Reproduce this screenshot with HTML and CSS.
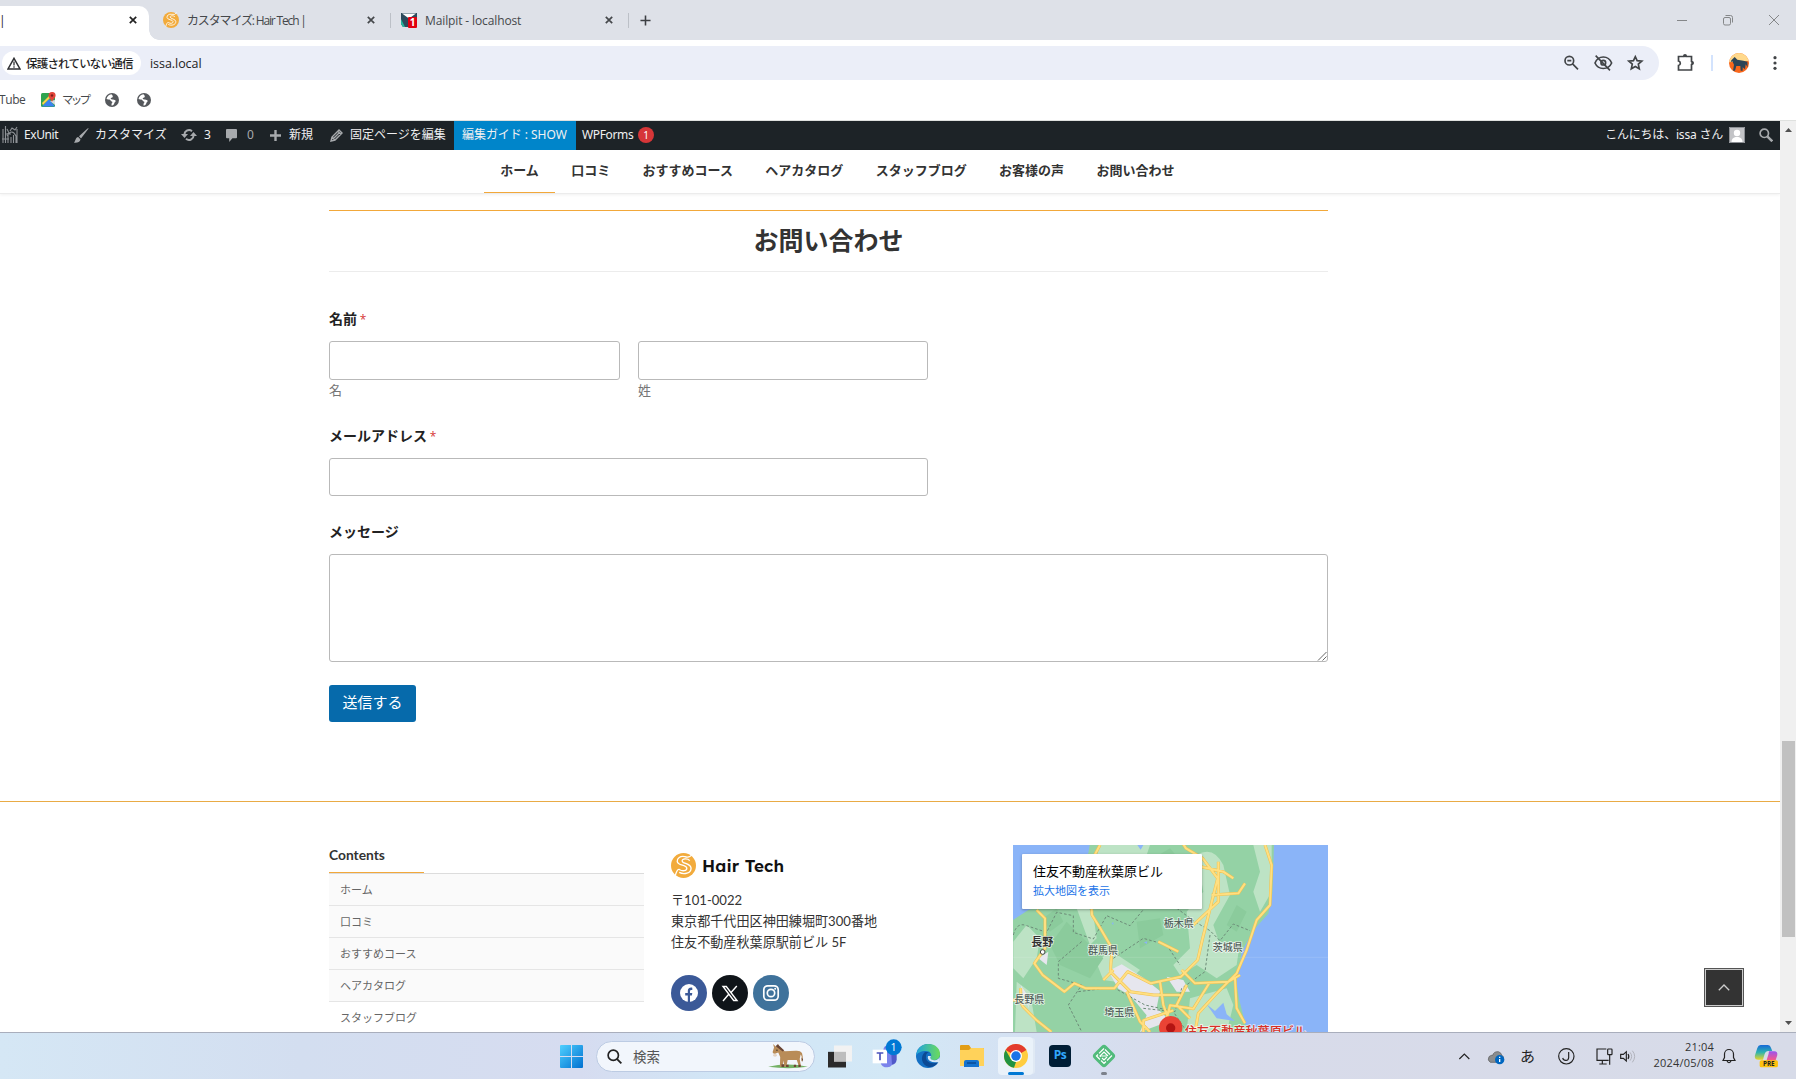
FILE: index.html
```html
<!DOCTYPE html>
<html lang="ja">
<head>
<meta charset="utf-8">
<title>Hair Tech</title>
<link rel="stylesheet" href="styles.css">
</head>
<body>
<svg class="defs" width="0" height="0" aria-hidden="true">
  <symbol id="x" viewBox="0 0 8 8"><path d="M.8.8l6.4 6.4M7.2.8L.8 7.2" stroke="currentColor" stroke-width="1.7"/></symbol>
  <symbol id="globe" viewBox="0 0 14 14"><circle cx="7" cy="7" r="7" fill="#55585c"/><path d="M6.400 1.200C4 1.500 2 3.500 1.500 6c1.500.7 2 .3 3 .6 1.200.4 1 1.600 2.200 1.900 1 .3.900 1 .3 1.500-.5.400-.6 1.300-.3 2.700 1.800-.2 2.300-1.200 2.600-2.400.3-1.200 1.300-1.100 1.300-2.200 0-1.300-1.600-1.200-2.600-1.600-.9-.4-2.300-.2-2.300-1.100 0-.8 1.600-.6 2-1.500.3-.7-.1-1.700-1.300-2.700z" fill="#fff"/></symbol>
  <symbol id="logo" viewBox="62 71 76 76"><circle cx="100" cy="109" r="38" fill="#f2ab3c"/><path d="M127 74q-8 13-23 8c-14-3-24 5-23 15 2 13 28 9 29 20 0 8-12 11-23 4-5-2-9 9-12 18" fill="none" stroke="#fff" stroke-width="4"/><path d="M119 94c-7-8-24-6-23 1 0 9 26 7 27 22 0 15-21 21-36 13" fill="none" stroke="#fff" stroke-width="4"/></symbol>
</svg>

<header class="tabs">
  <div class="tab active"><span>|</span><svg class="close"><use href="#x"/></svg></div>
  <div class="tab second"><svg class="fav"><use href="#logo"/></svg><span class="t1">カスタマイズ: Hair Tech |</span><svg class="close"><use href="#x"/></svg></div>
  <div class="tab third"><svg class="fav" viewBox="0 0 16 16"><path d="M0 1h16v14H2L0 12z" fill="#2c4a5c"/><path d="M1 1.500l7 5 7-5z" fill="#fff"/><path d="M0 7l4 8H2l-2-3z" fill="#22b59b"/><rect x="7" y="5" width="9" height="11" rx="1" fill="#e00010"/><text x="11.500" y="14" font-size="10" font-weight="700" text-anchor="middle" fill="#fff">1</text></svg><span class="t2">Mailpit - localhost</span><svg class="close"><use href="#x"/></svg></div>
  <svg class="plus" viewBox="0 0 12 12"><path d="M6 .5v11M.5 6h11" stroke="#3c3f43" stroke-width="1.700"/></svg>
  <svg class="winctl" viewBox="0 0 104 12" fill="none" stroke="#858789"><path d="M1 6.500h10M93 1l10 10M103 1L93 11"/><rect x="47.500" y="3.500" width="7" height="7.500" rx="1.500"/><path d="M49.500 1.500h5a2 2 0 0 1 2 2v5"/></svg>
</header>

<div class="toolbar">
  <div class="omnibox">
    <div class="chip"><svg viewBox="0 0 14 13" width="14" height="13"><path d="M7 1.300L13 12H1z" fill="none" stroke="#303134" stroke-width="1.500"/><path d="M7 4.500v4M7 9.300v1.500" stroke="#303134" stroke-width="1.300"/></svg><span>保護されていない通信</span></div>
    <span class="url">issa.local</span>
    <svg class="omniicons" viewBox="365 160 250 60" fill="none" stroke="#414447" stroke-width="5"><circle cx="387" cy="183" r="13"/><path d="M396 192l17 17M381 183h12"/><path d="M464 190c10-24 40-24 50 0-10 22-40 22-50 0z"/><circle cx="489" cy="189" r="7"/><path d="M466 168l43 44"/><path d="M585 171l5.500 12 14 1.500-10.500 9 3 14-12-7-12 7 3-14-10.500-9 14-1.500z"/></svg>
  </div>
  <svg class="puzzle" viewBox="0 0 17 17"><path d="M1.500 2.500h5.500a1.600 1.600 0 0 1 2 0h5.500v5a1.800 1.800 0 0 1 0 3v5.500h-13v-4.500a2.300 2.300 0 0 0 0-4.500z" fill="none" stroke="#414447" stroke-width="1.700"/><path d="M6 2a2 2 0 0 1 4 0zM15 7a2 2 0 0 1 0 4z" fill="#414447"/></svg>
  <i class="vbar"></i>
  <svg class="avatar" viewBox="867 159 60 60"><clipPath id="av"><circle cx="897" cy="189" r="30"/></clipPath><g clip-path="url(#av)"><path d="M867 159h60v60h-60z" fill="#f9671b"/><path d="M867 159h60v24l-60 4z" fill="#ffd98c"/><path d="M874 181l10-10 8 8 18 3 12 3 1 17-6-9-2 15-7-6 0 10h-6l-1-14-12 0-4 14-6 0 3-18-5-10-5 3z" fill="#2d4557"/></g></svg>
  <svg class="dots" viewBox="0 0 4 14" fill="#414447"><circle cx="2" cy="1.700" r="1.600"/><circle cx="2" cy="7" r="1.600"/><circle cx="2" cy="12.300" r="1.600"/></svg>
</div>

<div class="bookmarks">
  <span class="tube">Tube</span>
  <svg class="gmap" viewBox="0 0 15 15"><rect y="1" width="14" height="14" rx="1.500" fill="#2ea44f"/><path d="M1 14.500L8 7l6 7.500z" fill="#3b82f0"/><path d="M1 11L9 3l1.500 1.500L2 13z" fill="#fbd14b"/><path d="M9 9l5-1v5z" fill="#d9dce0"/><path d="M11 0a3.500 3.500 0 0 1 3.600 3.500C14.600 6 12 7 11 10 10 7 7.500 6 7.500 3.500A3.500 3.500 0 0 1 11 0z" fill="#e2453a"/><circle cx="11" cy="3.500" r="1.200" fill="#7c1e1a"/></svg>
  <span class="maplabel">マップ</span>
  <svg class="globe"><use href="#globe"/></svg><svg class="globe"><use href="#globe"/></svg>
</div>

<div class="viewport">
<div class="page">
  <nav class="adminbar">
    <svg class="i-ex" viewBox="0 0 16 18" fill="none" stroke="#8e9296" stroke-width="1.100"><path d="M1 3v14M3.500 0v17M6 7v10M5 10q5-8 9 0v7M3 8h6M9 11v6M11.500 9v8M0 13h7M8 5l2-3 3 2 2-3M15 3v14M5 3l2 4"/></svg>
    <span>ExUnit</span>
    <svg class="i-brush" viewBox="0 0 15 15" fill="#a7aaad"><path d="M14.800.2L7 10.500 5 8.300 13.500.5zM4.200 9l2.300 2.500c-.5 2.500-3 3.500-6.500 3.200C1.500 13 1.500 9.500 4.200 9z"/></svg>
    <span>カスタマイズ</span>
    <svg class="i-sync" viewBox="0 0 16 14" fill="none" stroke="#a7aaad" stroke-width="2"><path d="M3.500 7.500A4.600 4.600 0 0 1 11 3.200M12.500 6.500A4.600 4.600 0 0 1 5 10.800"/><path d="M0 6h7L3.500 10zM16 8H9l3.500-4z" fill="#a7aaad" stroke="none"/></svg>
    <span>3</span>
    <svg class="i-com" viewBox="0 0 12 14" fill="#a7aaad"><path d="M1 0h10q1 0 1 1v8q0 1-1 1H7l-3.500 4v-4H1q-1 0-1-1V1q0-1 1-1z"/></svg>
    <span class="dim">0</span>
    <svg class="i-plus" viewBox="0 0 12 12"><path d="M6 0v12M0 6h12" stroke="#a7aaad" stroke-width="2.600"/></svg>
    <span>新規</span>
    <svg class="i-pen" viewBox="0 0 13 13" fill="none" stroke="#a7aaad" stroke-width="1.400"><path d="M1 12l1-4L9 1l3 3-7 7zM2 8l3 3M8 2.500l3 3M3.500 9.500l6-6"/></svg>
    <span>固定ページを編集</span>
    <span class="guide">編集ガイド : SHOW</span>
    <span class="wpf">WPForms</span><b class="badge">1</b>
    <span class="hello">こんにちは、issa さん</span>
    <svg class="i-user" viewBox="0 0 16 16"><path d="M0 0h16v16H0z" fill="#c3c4c7"/><circle cx="8" cy="6" r="3.200" fill="#fff"/><path d="M2.500 15q0-4 4-5h3q4 1 4 5z" fill="#fff"/><path d="M.5.5h15v15H.5z" fill="none" stroke="#8c8f94"/></svg>
    <svg class="i-search" viewBox="0 0 14 14" fill="none" stroke="#a7aaad"><circle cx="5.300" cy="5.300" r="4.200" stroke-width="1.700"/><path d="M8.300 8.300l5 5" stroke-width="2.500"/></svg>
  </nav>
  <nav class="mainnav"><a class="on">ホーム</a><a>口コミ</a><a>おすすめコース</a><a>ヘアカタログ</a><a>スタッフブログ</a><a>お客様の声</a><a>お問い合わせ</a></nav>

  <main>
    <h1>お問い合わせ</h1>
    <form>
      <label>名前 <em>*</em></label>
      <div class="names"><div><div class="field f1"></div><small>名</small></div><div><div class="field f1"></div><small>姓</small></div></div>
      <label class="l2">メールアドレス <em>*</em></label>
      <div class="field mail"></div>
      <label class="l3">メッセージ</label>
      <div class="field area"><svg viewBox="0 0 10 10" width="10" height="10"><path d="M1 9.500L9.500 1M5.500 9.500l4-4" stroke="#666" fill="none"/></svg></div>
      <span class="submit">送信する</span>
    </form>
  </main>

  <footer>
    <section class="contents">
      <h2>Contents</h2>
      <ul><li>ホーム</li><li>口コミ</li><li>おすすめコース</li><li>ヘアカタログ</li><li>スタッフブログ</li></ul>
    </section>
    <section class="about">
      <div class="brand"><svg width="25" height="25"><use href="#logo"/></svg><span>Hair Tech</span></div>
      <p>〒101-0022<br>東京都千代田区神田練堀町300番地<br>住友不動産秋葉原駅前ビル 5F</p>
      <div class="social">
        <svg viewBox="0 0 36 36"><circle cx="18" cy="18" r="18" fill="#3b5998"/><circle cx="18" cy="18" r="9" fill="#fff"/><path d="M16.800 27.500v-7h-2.600v-2.400h2.600v-2c0-2.600 1.500-3.800 4.500-3.400v2.200c-1.600-.1-2.300.2-2.300 1.400v1.800h2.300l-.4 2.400H19v7z" fill="#3b5998"/></svg>
        <svg viewBox="0 0 36 36"><circle cx="18" cy="18" r="18" fill="#0f1419"/><path d="M11 11.500h3.300l10.700 14h-3.300zM24.800 11l-6.200 7M16.700 19.300L11 26" fill="none" stroke="#fff" stroke-width="1.400"/></svg>
        <svg viewBox="0 0 36 36"><circle cx="18" cy="18" r="18" fill="#3f729b"/><g fill="none" stroke="#fff" stroke-width="1.700"><rect x="10.800" y="10.800" width="14.400" height="14.400" rx="4"/><circle cx="18" cy="18" r="3.700"/></g><circle cx="22.200" cy="13.800" r="1" fill="#fff"/></svg>
      </div>
    </section>
    <section class="map">
      <svg viewBox="39 30 945 561" width="315" height="187">
        <path d="M39 30h945v561H39z" fill="#94d2a5"/>
        <path d="M300 30h150l-10 30-60 20-20 50-80-30zM590 60q50-30 80 30l20 90-50 90 20 60 60-10-10 70-60 40-60-40-50 30-20-30 50-50-10-110 50-60zM760 30h55l0 140-35 60-20-60 20-60zM40 320l40-50 40 40-10 60-40 60-30-30zM290 385l40-40 90 60-40 40-70-10zM570 490l110-30 20 50-20 81H560zM230 220q30-20 50 20l10 70-20 20zM50 440l40 30 20 121H45z" fill="#bde3c5"/>
        <path d="M150 330l50-70 60 60 50 50-40 60-90-40zM410 260l70-10 10 50-70 40zM460 70l50-30 50 60-50 20zM710 210l30 20-30 60-30-20zM130 250l40-30 20 40-40 30z" fill="#8bcb9c"/>
        <path d="M325 408l40-20 65 40 50 40-10 50 40 40-90 33 20-50-50-60-35-20zM500 425l50 10 20 35-40 0zM62 450l20 30 5 40-18-40zM115 370l30-20-5 40z" fill="#e6e6ee"/>
        <path d="M39 30h230l-4 25-80 140-100 30-46 30z" fill="#8ab4f8"/>
        <path d="M822 30h162v561H755l-20-25-8-35-10-40-8-50 8-40 8-50 35-65 45-50 12-60z" fill="#8ab4f8"/>
        <path d="M620 508l25 20 25-25 10 35 25 20-55-8zM338 160l12 25-10 0zM335 265l5-4v10zM432 322l10-3-2 8zM412 30h18l-8 14z" fill="#8ab4f8"/>
        <path d="M39 367h945" stroke="#fff" stroke-opacity=".18" stroke-width="2"/>
        <g fill="none" stroke="#6d8b78" stroke-width="3" stroke-dasharray="8 6"><path d="M40 300q10-40 40-28l60 20 30-60 50 10 0 50 60 20 40-70 70 30 50-60 60-15 80 60 50 30 30 30 40-50 50 20"/><path d="M245 320l-70 60 0 50 70 20-40 60 40 80"/><path d="M340 370l90-60 70 20 40 60M630 300l-15 110-70 50-20 70-90-20-90-50M235 470l80-10M430 520l90 10 40 60"/></g>
        <path id="roads" d="M39 495l20 0 10 20 40 40 45 36M62 460l0 40M110 225l25 25 0 90-32 45 25 35 65 50 30-25 35 15 85 0 40-50 70 35 90-20 50-50 15-65 45-180-45-60-50-30-40-60M300 30l-32 60 8 150 25 40 35 60-5 70 60 60 70 10 80 0M795 30l20 60-5 120-40 45-30 90-30 70-60 60-55 60-10 56M655 80l0 120-75 70M580 90l90 20 30 20M545 405l40 40 100-5 35-20M490 591l20-80 70 10 50-80M705 430l5 90 25 45M310 435l30-30M430 591l0-35 90-30M480 440l10 70 30 81M475 320l60 30M635 180l80-5 20-30M380 470l40 90 30 31M560 450l-30 60 40 40" fill="none" stroke="#f0c14f" stroke-width="9" stroke-linejoin="round"/>
        <path d="M39 495l20 0 10 20 40 40 45 36M62 460l0 40M110 225l25 25 0 90-32 45 25 35 65 50 30-25 35 15 85 0 40-50 70 35 90-20 50-50 15-65 45-180-45-60-50-30-40-60M300 30l-32 60 8 150 25 40 35 60-5 70 60 60 70 10 80 0M795 30l20 60-5 120-40 45-30 90-30 70-60 60-55 60-10 56M655 80l0 120-75 70M580 90l90 20 30 20M545 405l40 40 100-5 35-20M490 591l20-80 70 10 50-80M705 430l5 90 25 45M310 435l30-30M430 591l0-35 90-30M480 440l10 70 30 81M475 320l60 30M635 180l80-5 20-30M380 470l40 90 30 31M560 450l-30 60 40 40" fill="none" stroke="#ffdf81" stroke-width="6" stroke-linejoin="round"/>
        <circle cx="128" cy="351" r="7" fill="#fff" stroke="#444" stroke-width="3"/>
        <g class="places"><text class="city" x="94" y="333">長野</text><text x="491" y="275">栃木県</text><text x="264" y="356">群馬県</text><text x="638" y="349">茨城県</text><text x="43" y="505">長野県</text><text x="313" y="543">埼玉県</text></g>
        <circle cx="512" cy="578" r="35" fill="#ea4335"/><circle cx="512" cy="579" r="14" fill="#b31412"/>
        <text class="pinlabel" x="554" y="603">住友不動産秋葉原ビル</text>
      </svg>
      <div class="mapcard"><b>住友不動産秋葉原ビル</b><a>拡大地図を表示</a></div>
    </section>
  </footer>
  <div class="totop"><svg viewBox="0 0 12 7" width="12" height="7"><path d="M.8 6.300L6 1l5.200 5.300" fill="none" stroke="#ccc" stroke-width="1.300"/></svg></div>
</div>
<div class="scroll"><svg viewBox="0 0 7 4"><path d="M0 4l3.500-4L7 4z" fill="#505050"/></svg><i></i><svg viewBox="0 0 7 4"><path d="M0 0l3.500 4L7 0z" fill="#505050"/></svg></div>
</div>

<div class="taskbar">
  <svg class="start" viewBox="0 0 23 23"><defs><linearGradient id="w" x2="1" y2="1" gradientUnits="userSpaceOnUse" gradientTransform="scale(23)"><stop stop-color="#4fd0ff"/><stop offset="1" stop-color="#0070d0"/></linearGradient></defs><path d="M1 0h10v11H0V1q0-1 1-1zM12 0h10q1 0 1 1v10H12zM0 12h11v11H1q-1 0-1-1zM12 12h11v10q0 1-1 1H12z" fill="url(#w)"/></svg>
  <div class="search">
    <svg viewBox="0 0 16 16" width="15" height="15"><circle cx="6.700" cy="6.700" r="5.500" fill="none" stroke="#222" stroke-width="1.800"/><path d="M10.800 10.800l4.500 4.500" stroke="#222" stroke-width="2"/></svg>
    <span>検索</span>
    <svg class="donkey" viewBox="683 40 122 80"><path d="M683 113q60-14 122 0-60 9-122 0z" fill="#74b266"/><path d="M698 43l10 9 6-9 4 10 16 12 34-1q14-1 19 7 5 13 1 26l-3-2 1-14-3-6-3 14 4 24h-6l-7-21-28 0-4 20h-7l-1-18-5 19h-7l1-30-6-14-10 4q-8 0-7-6l4-13z" fill="#b98c58"/><path d="M706 50l6-6 20 18-4 4zM724 105h8v9h-8zM738 107h8v7h-8zM762 107h7v7h-7zM776 107h7v7h-7zM785 88h5v10z" fill="#6b4534"/><ellipse cx="704" cy="78" rx="6" ry="4.500" fill="#e3d4c5"/><circle cx="710" cy="62" r="2" fill="#222"/></svg>
  </div>
  <svg class="view" viewBox="864 44 72 68"><path d="M864 64h54v47h-54z" fill="#2b2b2b"/><path d="M882 45h54v48h-54z" fill="#f2f2f2"/><path d="M882 64h36v29h-36z" fill="#bdbdbd"/></svg>
  <svg class="teams" viewBox="154 26 90 90"><circle cx="205" cy="60" r="17" fill="#7b83eb"/><path d="M182 68h36v22q0 20-18 21-17 0-20-14z" fill="#7b83eb"/><path d="M212 73h16v15q-2 14-14 15z" fill="#5059c9"/><path d="M156 58h43v41h-43z" fill="#fff"/><path d="M168 68h20M178 68v22" stroke="#4b53bc" stroke-width="5"/><circle cx="219" cy="51" r="24" fill="#0078d4"/><text x="219" y="62" font-size="32" text-anchor="middle" fill="#fff">1</text></svg>
  <svg class="edge" viewBox="0 0 24 24"><defs><linearGradient id="eg"><stop stop-color="#1fa3e0"/><stop offset="1" stop-color="#6cdc59"/></linearGradient></defs><circle cx="12" cy="12" r="12" fill="#1470c4"/><path d="M24 10q0 5-4 6l2 3q2-4 2-9z" fill="#d5e7f6"/><path d="M0 12C1 4 6 0 12 0c8 0 12 5 12 10 0 4-3 6-6 6-3 0-5-1-3-3 1-3-1-6-5-6-5 0-9 2-10 5z" fill="url(#eg)"/><path d="M9 8c-5 4-4 13 4 15 4 0 8-2 9-5-6 3-13 0-12-6 0-2 1-3 3-4z" fill="#0c4a94"/><path d="M15 12q-2 3 2 4 4 1 7-2l-1 4q-6 1-9-1-3-2-2-5z" fill="#d6e8f6"/></svg>
  <svg class="folder" viewBox="0 0 24 22"><path d="M1 0h8l2 3h12q1 0 1 1v17H0V1q0-1 1-1z" fill="#e29d16"/><path d="M0 5h9l2-2h12q1 0 1 1v17H0z" fill="#ffd25a"/><path d="M4 22v-5q0-2 2-2h11q2 0 2 2v5z" fill="#1573cf"/><path d="M7 18h9" stroke="#0a4b94" stroke-width="1.500"/></svg>
  <div class="chrome"><svg viewBox="0 0 48 48" width="24" height="24"><circle cx="24" cy="24" r="24" fill="#ffcd40"/><path d="M24 24L3.200 12a24 24 0 0 1 41.600 0z" fill="#e33b2e"/><path d="M3.200 12L13.600 30l10.400 6L20 47.700A24 24 0 0 1 3.200 12z" fill="#229342"/><circle cx="24" cy="24" r="12" fill="#fff"/><circle cx="24" cy="24" r="9.500" fill="#1a73e8"/></svg><i></i></div>
  <div class="ps">Ps</div>
  <div class="local"><svg viewBox="0 0 24 24" width="24" height="24"><rect x="3.200" y="3.200" width="17.600" height="17.600" rx="3.500" transform="rotate(45 12 12)" fill="#51bb7b"/><path d="M12 4.500L4.500 12l7.500 7.500 7.500-7.500zM12 8L8 12l4 4 4-4zM9.500 12h5" fill="none" stroke="#fff" stroke-width="1.200" stroke-dasharray="7 1.500"/></svg><i></i></div>
  <svg class="tray1" viewBox="50 50 240 56" fill="none" stroke="#222" stroke-width="3.500"><path d="M57 86l15-15 15 15"/><path d="M150 96q-10-6-4-17 7-6 11-4 3-12 17-11 8 2 10 10 7 4 6 14l-10 8z" fill="#8a8c8e" stroke="#555" stroke-width="2"/><circle cx="178" cy="88" r="14" fill="#0067c0" stroke="none"/><path d="M178 86v9M178 79v4" stroke="#fff" stroke-width="4"/></svg>
  <span class="ime">あ</span>
  <svg class="tray2" viewBox="350 50 240 56" fill="none" stroke="#222" stroke-width="3.500"><circle cx="378" cy="78" r="23"/><path d="M385 65v17q-1 9-9 8-7 0-9-7"/><path d="M498 56h-28v34h35M486 90v11M477 101h22"/><rect x="502" y="56" width="13" height="17" rx="2"/><path d="M508 73v30"/><path d="M541 72h8l9-8v28l-9-8h-8z"/><path d="M563 71q5 7 0 15"/><path d="M569 66q10 12 0 25M576 61q14 17 0 35" stroke="#a9abb3" stroke-width="2.500"/></svg>
  <div class="clock">21:04<br>2024/05/08</div>
  <svg class="bell" viewBox="0 0 14 16" fill="none" stroke="#222" stroke-width="1.200"><path d="M1 12.500l1.500-3V6a4.500 4.500 0 0 1 9 0v3.500l1.500 3zM5 13q2 3.500 4 0"/></svg>
  <svg class="copilot" viewBox="940 44 74 72"><defs><linearGradient id="c1" x2="0" y2="1"><stop stop-color="#1769d8"/><stop offset=".5" stop-color="#2db3b0"/><stop offset="1" stop-color="#e8d529"/></linearGradient><linearGradient id="c2" x2="0" y2="1"><stop stop-color="#9a55ee"/><stop offset=".6" stop-color="#f0588f"/><stop offset="1" stop-color="#fb9555"/></linearGradient></defs><path d="M960 47h22q7 0 9 8l4 10h-12q-8 0-11 9l-5 17h-14q-13 0-10-13l7-22q3-9 10-9z" fill="url(#c1)"/><path d="M985 66h16q11 0 9 12l-6 18q-3 10-12 10h-26q9-2 11-10l7-23z" fill="url(#c2)"/><rect x="957" y="93" width="55" height="21" rx="5" fill="#ffc20e"/><text x="984.500" y="110.500" font-size="19" font-weight="700" text-anchor="middle" fill="#222">PRE</text></svg>
</div>
</body>
</html>
```
FILE: styles.css
```css
* { box-sizing: border-box; }
body {
  margin: 0; width: 1796px; height: 1079px; overflow: hidden;
  display: flex; flex-direction: column; background: #fff;
  font-family: "Open Sans", "Noto Sans CJK JP", sans-serif; color: #333;
}
svg { display: block; flex: none; }
span, a { white-space: nowrap; }
.defs { position: absolute; }

/* browser frame */
.tabs { height: 40px; background: #dee1e8; display: flex; align-items: center; font-size: 12px; color: #45484b; flex: none; }
.tab { display: flex; align-items: center; height: 34px; margin-top: 6px; padding-bottom: 6px; }
.tab .close { width: 8px; height: 8px; margin-left: auto; color: #45484b; }
.tab.active { width: 149px; background: #fff; border-radius: 0 10px 0 0; padding-right: 12px; color: #222; }
.tab.active .close { color: #222; }
.tab.active span { margin-left: -1px; }
.fav { width: 16px; height: 16px; }
.tab.second { width: 242px; padding-left: 14px; padding-right: 16px; position: relative; }
.tab.second::before { content: ""; position: absolute; left: 0; bottom: 0; width: 10px; height: 10px; background: radial-gradient(circle at 100% 0, #dee1e8 9.500px, #fff 10px); }
.tab.third { width: 238px; padding-left: 10px; padding-right: 16px; }
.tab.second, .tab.third { background: linear-gradient(#bcc0c7, #bcc0c7) right 7px / 1px 15px no-repeat; }
.fav + span { margin-left: 8px; }
.t1 { letter-spacing: -1.150px; }
.t2 { letter-spacing: -.12px; }
.plus { width: 11px; height: 11px; margin-left: 11px; margin-right: 0; }
.winctl { width: 104px; height: 12px; margin-left: auto; margin-right: 16px; }
.toolbar { height: 40px; display: flex; align-items: center; flex: none; padding-top: 6px; }
.omnibox { width: 1659px; height: 34px; background: #ebeef8; border-radius: 0 17px 17px 0; display: flex; align-items: center; padding-left: 2px; }
.chip { width: 139px; height: 24px; background: #fff; border-radius: 12px; display: flex; align-items: center; padding-left: 5px; font-size: 11.500px; font-weight: 500; color: #1f1f1f; }
.chip span { margin-left: 5px; letter-spacing: -.8px; }
.url { margin-left: 9px; font-size: 12.500px; color: #222; letter-spacing: -.05px; }
.omniicons { width: 83.300px; height: 20px; margin-left: auto; margin-right: 14px; }
.puzzle { width: 17px; height: 17px; margin-left: 18px; margin-bottom: 2px; }
.vbar { width: 2px; height: 16px; background: #d3e3fd; margin: 0 16px 0 17px; }
.avatar { width: 20px; height: 20px; }
.dots { width: 4px; height: 14px; margin-left: 24px; }
.bookmarks { height: 41px; flex: none; border-bottom: 1px solid #dfe1df; display: flex; align-items: center; font-size: 12px; color: #45484b; }
.bookmarks span { margin-top: -2px; }
.tube { width: 41px; letter-spacing: -.4px; text-indent: -1px; }
.gmap { width: 15px; height: 15px; margin-top: -1px; }
.maplabel { margin-left: 6px; width: 43px; letter-spacing: -2.700px; font-size: 11.500px; }
.globe { width: 14px; height: 14px; margin-right: 18px; }

/* web page */
.viewport { height: 911px; flex: none; display: flex; overflow: hidden; }
.page { width: 1780px; position: relative; height: 911px; overflow: hidden; }
.adminbar { height: 29px; background: #1d2327; color: #f0f0f1; display: flex; align-items: center; font: 400 12px/26px "Noto Sans", "Noto Sans CJK JP", sans-serif; }
.adminbar > span { padding-bottom: 1px; }
.adminbar > svg { margin-top: -1px; }
.i-ex { width: 16px; height: 18px; margin: 0 6px 0 2px; }
.i-ex + span { width: 50px; letter-spacing: -.4px; }
.i-brush { width: 15px; height: 15px; margin-right: 6px; }
.i-brush + span { width: 86px; }
.i-sync { width: 16px; height: 14px; margin-right: 7px; }
.i-sync + span { width: 22px; }
.i-com { width: 11px; height: 13px; margin-right: 10px; }
.i-com + span { width: 23px; color: #a7aaad; }
.i-plus { width: 11px; height: 11px; margin-right: 8px; }
.i-plus + span { width: 41px; }
.i-pen { width: 13px; height: 13px; margin-right: 7px; }
.i-pen + span { width: 104px; }
.adminbar .guide { width: 122px; height: 29px; line-height: 28px; background: #0085ca; padding-left: 8px; letter-spacing: -.05px; }
.wpf { margin-left: 6px; width: 56px; letter-spacing: -.35px; }
.badge { width: 16px; height: 16px; margin-top: -1px; border-radius: 8px; background: #d63638; color: #fff; font-size: 10px; line-height: 16px; text-align: center; font-weight: 400; }
.hello { margin-left: auto; letter-spacing: -.2px; }
.i-user { width: 16px; height: 16px; margin-left: 6px; }
.i-search { width: 14px; height: 14px; margin: 0 7px 0 14px; }
.mainnav { height: 44px; border-bottom: 1px solid #ececec; box-shadow: 0 1px 3px rgba(0,0,0,.06); display: flex; padding-left: 484px; font-size: 13px; font-weight: 700; line-height: 41px; }
.mainnav a { padding: 0 16.200px; height: 43px; }
.mainnav .on { border-bottom: 1px solid #f2a83a; }
main { width: 999px; margin: 16px 0 0 329px; height: 591px; }
h1 { margin: 0; height: 62px; border-top: 1px solid #f2a83a; border-bottom: 1px solid #ececec; text-align: center; font-size: 25px; line-height: 59px; }
form { padding-top: 37px; font-size: 14px; color: #222; }
label { display: block; font-weight: 700; line-height: 20px; height: 32px; }
label em { color: #d63637; font-style: normal; font-weight: 400; font-size: 12px; margin-left: -1px; }
.field { border: 1px solid #b9b9b9; border-radius: 3px; background: #fff; }
.names { display: grid; grid-template-columns: 291px 290px; column-gap: 18px; }
.f1 { height: 39px; }
small { display: block; font-size: 13px; line-height: 21px; height: 22px; color: #767676; }
.l2 { margin-top: 24px; height: 32px; }
.mail { width: 599px; height: 38px; }
.l3 { margin-top: 26px; height: 32px; }
.area { height: 108px; display: flex; justify-content: flex-end; align-items: flex-end; }
.submit { display: block; margin-top: 23px; width: 87px; height: 37px; border-radius: 3px; background: #066aab; color: #fff; font-size: 15px; line-height: 34px; text-align: center; }
footer { border-top: 1px solid #e9ab45; display: flex; padding: 43px 0 0 329px; height: 231px; overflow: hidden; font-family: Lato, "Noto Sans CJK JP", sans-serif; }
.contents { width: 315px; }
h2 { margin: 0; height: 29px; font-size: 13.800px; line-height: 20px; border-bottom: 1px solid #dcdcdc; background: linear-gradient(#f2a83a, #f2a83a) 0 27px / 95px 1px no-repeat; }
ul { margin: 0; padding: 0; list-style: none; }
li { height: 32px; border-bottom: 1px solid #e5e5e5; background: #fafafa; padding-left: 11px; font-size: 11px; line-height: 31px; color: #666; }
li:last-child { background: none; border: 0; }
.about { margin-left: 27px; width: 342px; }
.brand { display: flex; align-items: center; height: 25px; margin-top: 8px; color: #111; font: 600 17px "Lexend", Inter, sans-serif; }
.brand span { margin-left: 6px; letter-spacing: .15px; }
.about p { margin: 12px 0 22px; font-size: 13.100px; line-height: 21px; }
.social { display: flex; gap: 5px; }
.social svg { width: 36px; height: 36px; }
.map { position: relative; width: 315px; height: 187px; }
.places text { font-size: 30px; font-weight: 500; fill: #52605a; stroke: #fff; stroke-width: 5px; stroke-opacity: .7; paint-order: stroke; }
.places .city { font-size: 33px; font-weight: 700; fill: #333; }
.pinlabel { font-size: 36.500px; font-weight: 500; fill: #d93025; stroke: #fff; stroke-width: 5px; stroke-opacity: .7; paint-order: stroke; }
.mapcard { position: absolute; left: 9px; top: 9px; width: 180px; height: 55px; background: #fff; box-shadow: 0 1px 3px rgba(0,0,0,.3); padding: 8px 0 0 11px; display: flex; flex-direction: column; color: #000; border-radius: 1px; }
.mapcard b { font-size: 13px; line-height: 19px; font-weight: 400; }
.mapcard a { font-size: 11px; line-height: 20px; color: #1a73e8; }
.totop { position: absolute; left: 1704px; top: 847px; width: 40px; height: 39px; border: 1px solid #555; background: #333; box-shadow: inset 0 0 0 1px #ccc; display: flex; align-items: center; justify-content: center; }
.scroll { width: 16px; background: #f0f0f0; display: flex; flex-direction: column; align-items: center; padding: 7px 0 7px 1px; }
.scroll svg { width: 7px; height: 4px; }
.scroll i { width: 13px; height: 196px; margin: 609px 0 auto; background: #c1c1c1; }

/* taskbar */
.taskbar { height: 47px; flex: none; border-top: 1px solid #a9aebc; display: flex; align-items: center; padding: 0 0 0 560px; background: linear-gradient(90deg, #d5e7f5 0, #d3def0 300px, #d6dcf0 580px, #d1e6f6 720px, #d3e8f6 900px, #d5e0f2 1040px, #d8dbea 1200px, #d7dbe8); }
.start { width: 23px; height: 23px; }
.search { margin-left: 13px; width: 219px; height: 31px; border-radius: 16px; background: #f2f6fc; border: 1px solid #bccbe3; display: flex; align-items: center; padding-left: 10px; }
.search span { margin-left: 11px; margin-top: -1px; font-size: 13.500px; color: #555; }
.donkey { width: 40px; height: 26px; margin-left: auto; margin-right: 6px; }
.view { width: 24px; height: 23px; margin-left: 13px; }
.teams { width: 30px; height: 30px; margin: -5px 0 0 20px; }
.edge { width: 24px; height: 24px; margin-left: 14px; }
.folder { width: 24px; height: 22px; margin-left: 20px; }
.chrome { margin-left: 14px; width: 35px; height: 38px; border-radius: 4px; background: #eaf2fa; box-shadow: 3px 0 0 -1px #e0e9f4; display: flex; flex-direction: column; align-items: center; padding-top: 7px; }
.chrome i { width: 16px; height: 3px; border-radius: 2px; background: #0078d4; margin-top: 4px; }
.ps { margin-left: 16px; width: 22px; height: 22px; border-radius: 4px; background: #001e36; color: #31a8ff; font-size: 12px; font-weight: 700; line-height: 20px; text-align: center; letter-spacing: -.5px; }
.local { margin-left: 21px; height: 38px; padding-top: 7px; display: flex; flex-direction: column; align-items: center; }
.local i { width: 6px; height: 3px; border-radius: 2px; background: #7c818b; margin-top: 4px; }
.tray1 { width: 80px; height: 18.700px; margin-left: 341px; }
.ime { width: 20px; margin-left: -17px; margin-top: -1px; font-size: 15px; color: #222; }
.tray2 { width: 80px; height: 18.700px; margin-left: 17px; }
.clock { width: 77px; text-align: right; font-size: 11px; letter-spacing: .2px; line-height: 16px; color: #333; margin-top: -2px; }
.bell { width: 14px; height: 16px; margin-left: 8px; }
.copilot { width: 24.600px; height: 24px; margin-left: 18px; }
```
